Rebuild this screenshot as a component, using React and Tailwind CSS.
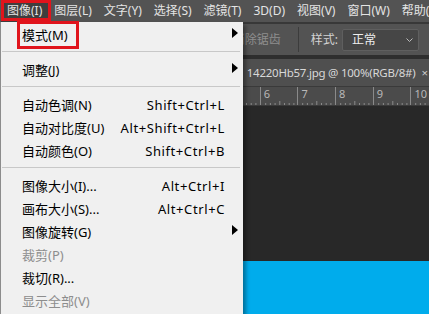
import React from 'react';

const FONT = { fontFamily: '"Noto Sans", "Noto Sans CJK SC", sans-serif' };

const MENUBAR = ['图像(I)', '图层(L)', '文字(Y)', '选择(S)', '滤镜(T)', '3D(D)', '视图(V)', '窗口(W)', '帮助(H)'];

// image menu, in order; 'sep' draws a divider
const ITEMS = [
  { label: '模式(M)', sub: true },
  'sep',
  { label: '调整(J)', sub: true },
  'sep',
  { label: '自动色调(N)', key: 'Shift+Ctrl+L' },
  { label: '自动对比度(U)', key: 'Alt+Shift+Ctrl+L' },
  { label: '自动颜色(O)', key: 'Shift+Ctrl+B' },
  'sep',
  { label: '图像大小(I)...', key: 'Alt+Ctrl+I' },
  { label: '画布大小(S)...', key: 'Alt+Ctrl+C' },
  { label: '图像旋转(G)', sub: true },
  { label: '裁剪(P)', disabled: true },
  { label: '裁切(R)...' },
  { label: '显示全部(V)', disabled: true },
];

function Arrow() {
  return (
    <svg width="6" height="10" viewBox="0 0 6 10" className="-translate-y-[3px]">
      <path d="M0 0 L6 5 L0 10 Z" fill="#000" />
    </svg>
  );
}

function Ruler() {
  // only the part right of the menu is visible, so start at the 5 mark
  const marks = [null, 6, 7, 8, 9, 10];
  return (
    <div className="h-[19px] bg-[#4b4b4b] border-b border-[#3a3a3a] flex pl-[222px] overflow-hidden">
      {marks.map((n, i) => (
        <div key={i} className="relative w-[37.7px] shrink-0 h-full border-l border-[#8a8a8a]">
          {n !== null && <span className="block pl-[3px] text-[11px] leading-[13px] text-[#b8b8b8]">{n}</span>}
          <svg className="absolute left-0 bottom-0" width="38" height="4" viewBox="0 0 38 4">
            {[4.7, 9.4, 14.1, 18.8, 23.5, 28.2, 32.9].map((x, j) => (
              <line key={j} x1={x} y1={j === 3 ? 0 : 2} x2={x} y2="4" stroke="#8a8a8a" strokeWidth="1" />
            ))}
          </svg>
        </div>
      ))}
    </div>
  );
}

export default function App() {
  return (
    <div className="relative w-[429px] h-[314px] overflow-hidden bg-[#282828] flex flex-col" style={FONT}>
      {/* menu bar */}
      <div className="h-[22px] shrink-0 bg-[#535353] flex items-stretch pl-[1px] text-[12px] text-[#e4e4e4] whitespace-nowrap overflow-hidden">
        {MENUBAR.map((m, i) => (
          <span key={m} className={`flex items-center shrink-0 px-[6px] ${i === 0 ? 'bg-[#3e3e3e]' : ''}`}>
            {m}
          </span>
        ))}
      </div>
      <div className="h-[2px] shrink-0 bg-[#383838]" />

      {/* options bar */}
      <div className="h-[31px] shrink-0 bg-[#535353] flex items-center justify-end pr-[10px] text-[12px] whitespace-nowrap">
        <span className="text-[#8e8e8e]">消除锯齿</span>
        <span className="ml-[17px] w-px h-[25px] bg-[#3c3c3c]" />
        <span className="ml-[12px] text-[#d2d2d2]">样式:</span>
        <div className="ml-[4px] w-[77px] h-[22px] bg-[#464646] border border-[#5f5f5f] rounded-[2px] flex items-center justify-between pl-[9px] pr-[5px]">
          <span className="text-[#eeeeee]">正常</span>
          <svg width="7" height="4" viewBox="0 0 7 4">
            <path d="M0.5 0.5 L3.5 3.5 L6.5 0.5" fill="none" stroke="#bdbdbd" strokeWidth="1" />
          </svg>
        </div>
      </div>
      <div className="h-[4px] shrink-0 bg-[#2e2e2e]" />

      {/* document tab */}
      <div className="h-[28px] shrink-0 bg-[#4f4f4f] border-b border-[#3a3a3a] flex items-center justify-end pr-[1px] text-[11.5px] text-[#d8d8d8] whitespace-nowrap overflow-hidden">
        <span className="tracking-[-0.25px]">14220Hb57.jpg @ 100%(RGB/8#)</span>
        <span className="ml-[6px] text-[#c8c8c8]">×</span>
      </div>

      <Ruler />

      {/* canvas */}
      <div className="flex-1 bg-[#282828]" />
      <div className="h-[53px] shrink-0 bg-[#00acec]" />

      {/* image menu dropdown */}
      <div className="absolute left-0 top-[22px] bottom-0 w-[243px] bg-[#f0f0f0] border-l border-[#8c8c8c] shadow-[3px_3px_4px_rgba(0,0,0,0.35)] pt-[2px] text-[13px] whitespace-nowrap">
        {ITEMS.map((it, i) =>
          it === 'sep' ? (
            <div key={i} className="h-[12px] pt-[4px] pl-[1px] pr-[3px]">
              <div className="h-px bg-[#c8c8c8]" />
            </div>
          ) : (
            <div key={i} className={`h-[23px] flex items-center pl-[21px] ${it.disabled ? 'text-[#8d8d8d]' : 'text-black'}`}>
              <span className="flex-1">{it.label}</span>
              {it.key && <span className="tracking-[0.6px]">{it.key}</span>}
              <span className="w-[18px] pl-[7px] flex items-center">{it.sub && <Arrow />}</span>
            </div>
          )
        )}
      </div>

      {/* red annotation boxes */}
      <div className="absolute left-[1px] top-0 w-[50px] h-[21px] border-[3px] border-[#e0141c]" />
      <div className="absolute left-[17px] top-[21px] w-[62px] h-[28px] border-[3px] border-[#e0141c]" />
    </div>
  );
}
